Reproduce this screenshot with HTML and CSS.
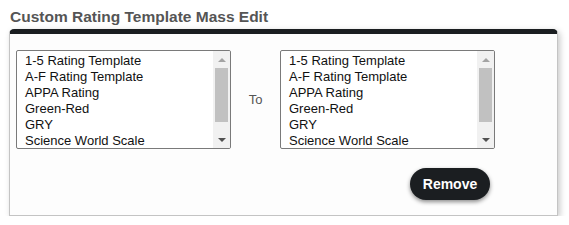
FILE: index.html
```html
<!DOCTYPE html>
<html lang="en">
<head>
<meta charset="utf-8">
<title>Custom Rating Template Mass Edit</title>
<link rel="stylesheet" href="styles.css">
</head>
<body>
<h1 class="title">Custom Rating Template Mass Edit</h1>
<section class="panel">
  <div class="pickers">
    <div class="listbox">
      <ul class="options">
        <li>1-5 Rating Template</li>
        <li>A-F Rating Template</li>
        <li>APPA Rating</li>
        <li>Green-Red</li>
        <li>GRY</li>
        <li>Science World Scale</li>
      </ul>
      <div class="scrollbar">
        <span class="arrow"><span class="tri up"></span></span>
        <span class="track"><span class="thumb"></span></span>
        <span class="arrow"><span class="tri down"></span></span>
      </div>
    </div>
    <div class="to">To</div>
    <div class="listbox">
      <ul class="options">
        <li>1-5 Rating Template</li>
        <li>A-F Rating Template</li>
        <li>APPA Rating</li>
        <li>Green-Red</li>
        <li>GRY</li>
        <li>Science World Scale</li>
      </ul>
      <div class="scrollbar">
        <span class="arrow"><span class="tri up"></span></span>
        <span class="track"><span class="thumb"></span></span>
        <span class="arrow"><span class="tri down"></span></span>
      </div>
    </div>
  </div>
  <div class="actions">
    <button class="btn" type="button">Remove</button>
  </div>
</section>
</body>
</html>
```
FILE: styles.css
```css
html, body {
  background: #fff;
}
body {
  margin: 0;
  padding: 0 0 0 9px;
  font-family: "Liberation Sans", Arial, sans-serif;
}
.title {
  margin: 0 0 3px 1px;
  padding-top: 7px;
  font-size: 15.5px;
  line-height: 19px;
  font-weight: bold;
  color: #555;
}
.panel {
  box-sizing: border-box;
  width: 549px;
  background: #fdfdfd;
  border: 1px solid #c4c4c4;
  border-top: 5px solid #1b1e21;
  border-radius: 5px 5px 0 0;
  box-shadow: 2px 2px 6px rgba(0, 0, 0, 0.22);
  padding: 16px 0 15px 6px;
}
.pickers {
  display: flex;
  align-items: center;
}
.listbox {
  box-sizing: border-box;
  width: 215px;
  height: 99px;
  display: flex;
  background: #fff;
  border: 1px solid #7a7a7a;
  border-radius: 2px;
  overflow: hidden;
}
.options {
  flex: 1;
  margin: 0;
  padding: 2px 0 0 8px;
  list-style: none;
  font-size: 13px;
  line-height: 16px;
  color: #111;
  white-space: nowrap;
  overflow: hidden;
}
.scrollbar {
  width: 17px;
  display: flex;
  flex-direction: column;
  background: #f1f1f1;
}
.arrow {
  height: 17px;
  display: flex;
  align-items: center;
  justify-content: center;
}
.tri {
  width: 0;
  height: 0;
  border-left: 4px solid transparent;
  border-right: 4px solid transparent;
}
.tri.up {
  border-bottom: 4px solid #a3a3a3;
}
.tri.down {
  border-top: 4px solid #505050;
}
.track {
  flex: 1;
  display: flex;
  flex-direction: column;
}
.thumb {
  height: 54px;
  margin: 0 2px;
  background: #c1c1c1;
}
.to {
  width: 49px;
  text-align: center;
  font-size: 13px;
  color: #555;
}
.actions {
  display: flex;
  justify-content: flex-end;
  margin: 19px 67px 0 0;
}
.btn {
  width: 80px;
  height: 32px;
  padding: 0;
  border: none;
  border-radius: 16px;
  background: #1b1e21;
  color: #fff;
  font-family: "Liberation Sans", Arial, sans-serif;
  font-size: 14px;
  font-weight: bold;
  box-shadow: 0 2px 4px rgba(0, 0, 0, 0.45);
}
```
